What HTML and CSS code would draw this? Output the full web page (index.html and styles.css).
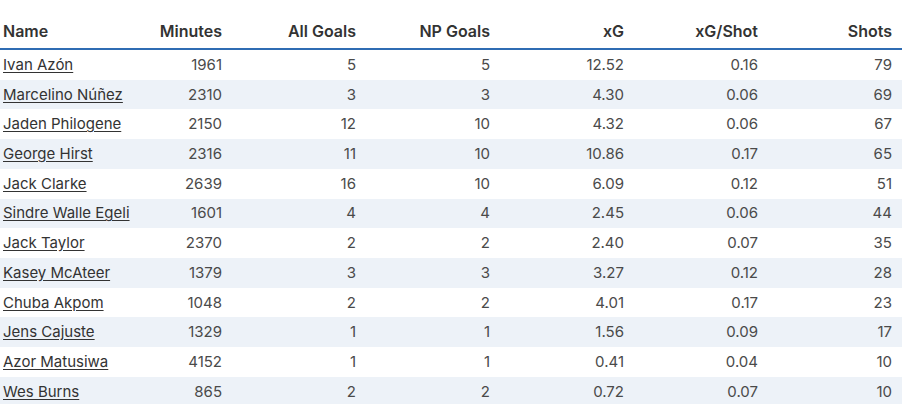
FILE: index.html
```html
<!DOCTYPE html>
<html>
<head>
<meta charset="utf-8">
<link rel="stylesheet" href="styles.css">
</head>
<body>
<div class="wrap">
<table class="stats">
  <colgroup>
    <col class="c-name"><col class="c-min"><col class="c-n"><col class="c-n"><col class="c-n"><col class="c-n"><col class="c-n">
  </colgroup>
  <thead>
    <tr>
      <th class="name">Name</th>
      <th>Minutes</th>
      <th>All Goals</th>
      <th>NP Goals</th>
      <th>xG</th>
      <th>xG/Shot</th>
      <th>Shots</th>
    </tr>
  </thead>
  <tbody>
    <tr><td class="name"><a href="#">Ivan Azón</a></td><td>1961</td><td>5</td><td>5</td><td>12.52</td><td>0.16</td><td>79</td></tr>
    <tr><td class="name"><a href="#">Marcelino Núñez</a></td><td>2310</td><td>3</td><td>3</td><td>4.30</td><td>0.06</td><td>69</td></tr>
    <tr><td class="name"><a href="#">Jaden Philogene</a></td><td>2150</td><td>12</td><td>10</td><td>4.32</td><td>0.06</td><td>67</td></tr>
    <tr><td class="name"><a href="#">George Hirst</a></td><td>2316</td><td>11</td><td>10</td><td>10.86</td><td>0.17</td><td>65</td></tr>
    <tr><td class="name"><a href="#">Jack Clarke</a></td><td>2639</td><td>16</td><td>10</td><td>6.09</td><td>0.12</td><td>51</td></tr>
    <tr><td class="name"><a href="#">Sindre Walle Egeli</a></td><td>1601</td><td>4</td><td>4</td><td>2.45</td><td>0.06</td><td>44</td></tr>
    <tr><td class="name"><a href="#">Jack Taylor</a></td><td>2370</td><td>2</td><td>2</td><td>2.40</td><td>0.07</td><td>35</td></tr>
    <tr><td class="name"><a href="#">Kasey McAteer</a></td><td>1379</td><td>3</td><td>3</td><td>3.27</td><td>0.12</td><td>28</td></tr>
    <tr><td class="name"><a href="#">Chuba Akpom</a></td><td>1048</td><td>2</td><td>2</td><td>4.01</td><td>0.17</td><td>23</td></tr>
    <tr><td class="name"><a href="#">Jens Cajuste</a></td><td>1329</td><td>1</td><td>1</td><td>1.56</td><td>0.09</td><td>17</td></tr>
    <tr><td class="name"><a href="#">Azor Matusiwa</a></td><td>4152</td><td>1</td><td>1</td><td>0.41</td><td>0.04</td><td>10</td></tr>
    <tr><td class="name"><a href="#">Wes Burns</a></td><td>865</td><td>2</td><td>2</td><td>0.72</td><td>0.07</td><td>10</td></tr>
  </tbody>
</table>
</div>
</body>
</html>
```

FILE: styles.css
```css
html, body {
  margin: 0;
  padding: 0;
  background: #ffffff;
}

body {
  font-family: Inter, "Noto Sans", "Liberation Sans", sans-serif;
  color: #444;
  overflow: hidden;
}

.wrap {
  width: 902px;
}

.stats {
  width: 902px;
  border-collapse: collapse;
  table-layout: fixed;
}

.c-name { width: 156px; }
.c-min { width: 76px; }
.c-n { width: 134px; }

.stats th {
  height: 49px;
  box-sizing: border-box;
  padding: 0 10px 7px 0;
  vertical-align: bottom;
  text-align: right;
  font-size: 16px;
  font-weight: 600;
  color: #333;
  border-bottom: 2px solid #2f6cb3;
  background: #fff;
  white-space: nowrap;
}

.stats td {
  height: 29.73px;
  padding: 0 10px 0 0;
  line-height: 20px;
  vertical-align: middle;
  text-align: right;
  font-size: 15px;
  color: #4a4a4a;
  white-space: nowrap;
}

.stats tbody tr:nth-child(even) td {
  background: #edf2f8;
}

.stats tbody tr:nth-child(odd) td {
  background: #ffffff;
}

.stats .name {
  text-align: left;
  padding-left: 3px;
  padding-right: 0;
  position: sticky;
  left: 0;
  z-index: 1;
  box-shadow: 3px 0 5px -2px rgba(0, 0, 0, 0.12);
}

.stats .name a {
  color: #333;
  text-decoration: underline;
  text-underline-offset: 2px;
}
```
